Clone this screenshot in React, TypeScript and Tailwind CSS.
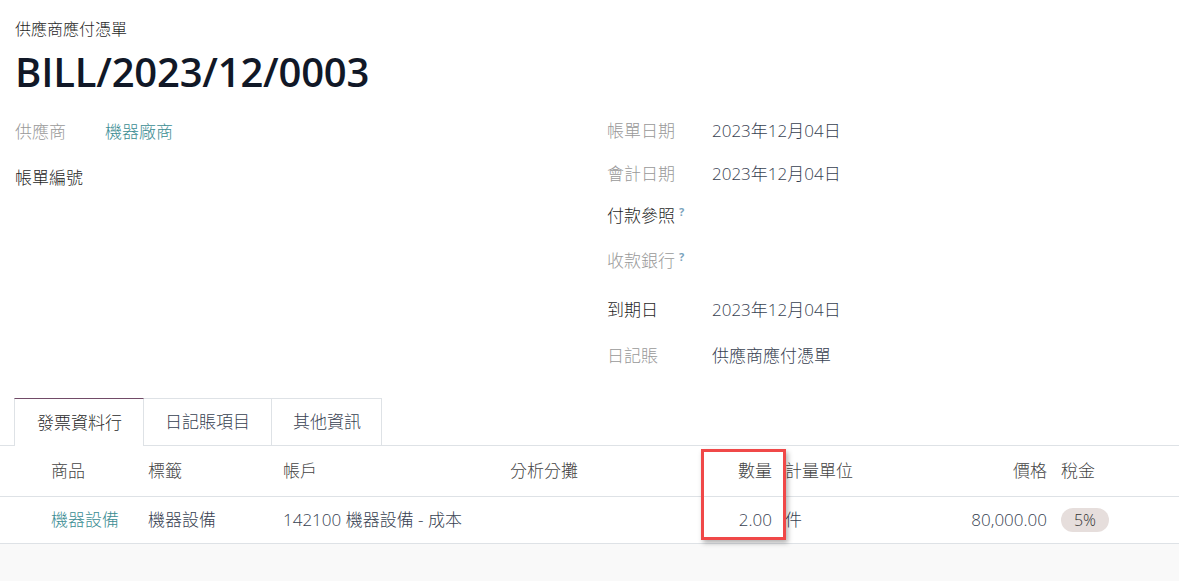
import { ReactNode } from 'react';

const font = { fontFamily: '"Open Sans", "Noto Sans CJK TC", sans-serif' };

function Field({ label, value, dark, hint, h, lw }: { label: string; value?: ReactNode; dark?: boolean; hint?: boolean; h: string; lw: string }) {
    return (
        <div className={`flex items-center ${h}`}>
            <div className={`${lw} shrink-0 ${dark ? 'text-[#1f1f1f]' : 'text-[#999]'}`}>
                {label}
                {hint && <span className="relative top-[-6px] ml-[4px] text-[11px] font-bold text-[#7aa3bd]">?</span>}
            </div>
            <div className="text-[#374151]">{value}</div>
        </div>
    );
}

export default function App() {
    return (
        <div className="w-[1179px] h-[581px] bg-white overflow-hidden text-[17px] font-light" style={font}>
            <div className="pl-[15px] pt-[17px]">
                <div className="text-[16px] leading-[24px] text-[#1f1f1f]">供應商應付憑單</div>
                <h1 className="mt-[5px] text-[40px] leading-[52px] font-semibold text-[#111827] tracking-[-0.2px]">BILL/2023/12/0003</h1>
            </div>

            <div className="flex mt-[12px]">
                <div className="w-[607px] pl-[15px]">
                    <Field h="h-[44px]" lw="w-[90px]" label="供應商" value={<span className="text-[#3b8d93]">機器廠商</span>} />
                    <Field h="h-[47px]" lw="w-[90px]" label="帳單編號" dark />
                </div>
                <div className="flex-1">
                    <Field h="h-[42px]" lw="w-[105px]" label="帳單日期" value="2023年12月04日" />
                    <Field h="h-[43px]" lw="w-[105px]" label="會計日期" value="2023年12月04日" />
                    <Field h="h-[42px]" lw="w-[105px]" label="付款參照" dark hint />
                    <Field h="h-[47px]" lw="w-[105px]" label="收款銀行" hint />
                    <Field h="h-[52px]" lw="w-[105px]" label="到期日" dark value="2023年12月04日" />
                    <Field h="h-[40px]" lw="w-[105px]" label="日記賬" value="供應商應付憑單" />
                </div>
            </div>

            <div className="mt-[22px] flex items-end border-b border-[#dee2e6] pl-[14px]">
                <div className="-mb-px h-[48px] pl-[22px] pr-[21px] flex items-center border-x border-t border-[#dee2e6] border-t-[#714b67] bg-white text-[#1f1f1f]">發票資料行</div>
                <div className="h-[47px] px-[21px] flex items-center border-r border-t border-[#dee2e6] text-[#374151]">日記賬項目</div>
                <div className="h-[47px] pl-[21px] pr-[20px] flex items-center border-r border-t border-[#dee2e6] text-[#374151]">其他資訊</div>
            </div>

            <div className="relative">
                <div className="grid grid-cols-[148px_135px_227px_190px_82px_178px_97px_1fr] h-[51px] items-center border-b border-[#dee2e6] text-[#444]">
                    <div className="pl-[51px]">商品</div>
                    <div>標籤</div>
                    <div>帳戶</div>
                    <div>分析分攤</div>
                    <div className="text-right pr-[10px]">數量</div>
                    <div className="pl-[3px]">計量單位</div>
                    <div className="text-right pr-[10px]">價格</div>
                    <div className="pl-[4px]">稅金</div>
                </div>
                <div className="grid grid-cols-[148px_135px_227px_190px_82px_178px_97px_1fr] h-[47px] items-center border-b border-[#dee2e6] text-[#374151]">
                    <div className="pl-[51px] text-[#3b8d93]">機器設備</div>
                    <div>機器設備</div>
                    <div>142100 機器設備 - 成本</div>
                    <div></div>
                    <div className="text-right pr-[10px]">2.00</div>
                    <div className="pl-[3px]">件</div>
                    <div className="text-right pr-[10px]">80,000.00</div>
                    <div className="pl-[4px]">
                        <span className="inline-flex items-center justify-center w-[48px] h-[24px] rounded-full bg-[#e6dedc] text-[16px] text-[#333]">5%</span>
                    </div>
                </div>
                <div className="absolute left-[701px] top-[3px] w-[85px] h-[91px] border-[3px] border-[#f04848] shadow-[2px_3px_5px_rgba(0,0,0,0.3)]" />
                <div className="h-[40px] bg-[#f9f9f9]" />
            </div>
        </div>
    );
}
